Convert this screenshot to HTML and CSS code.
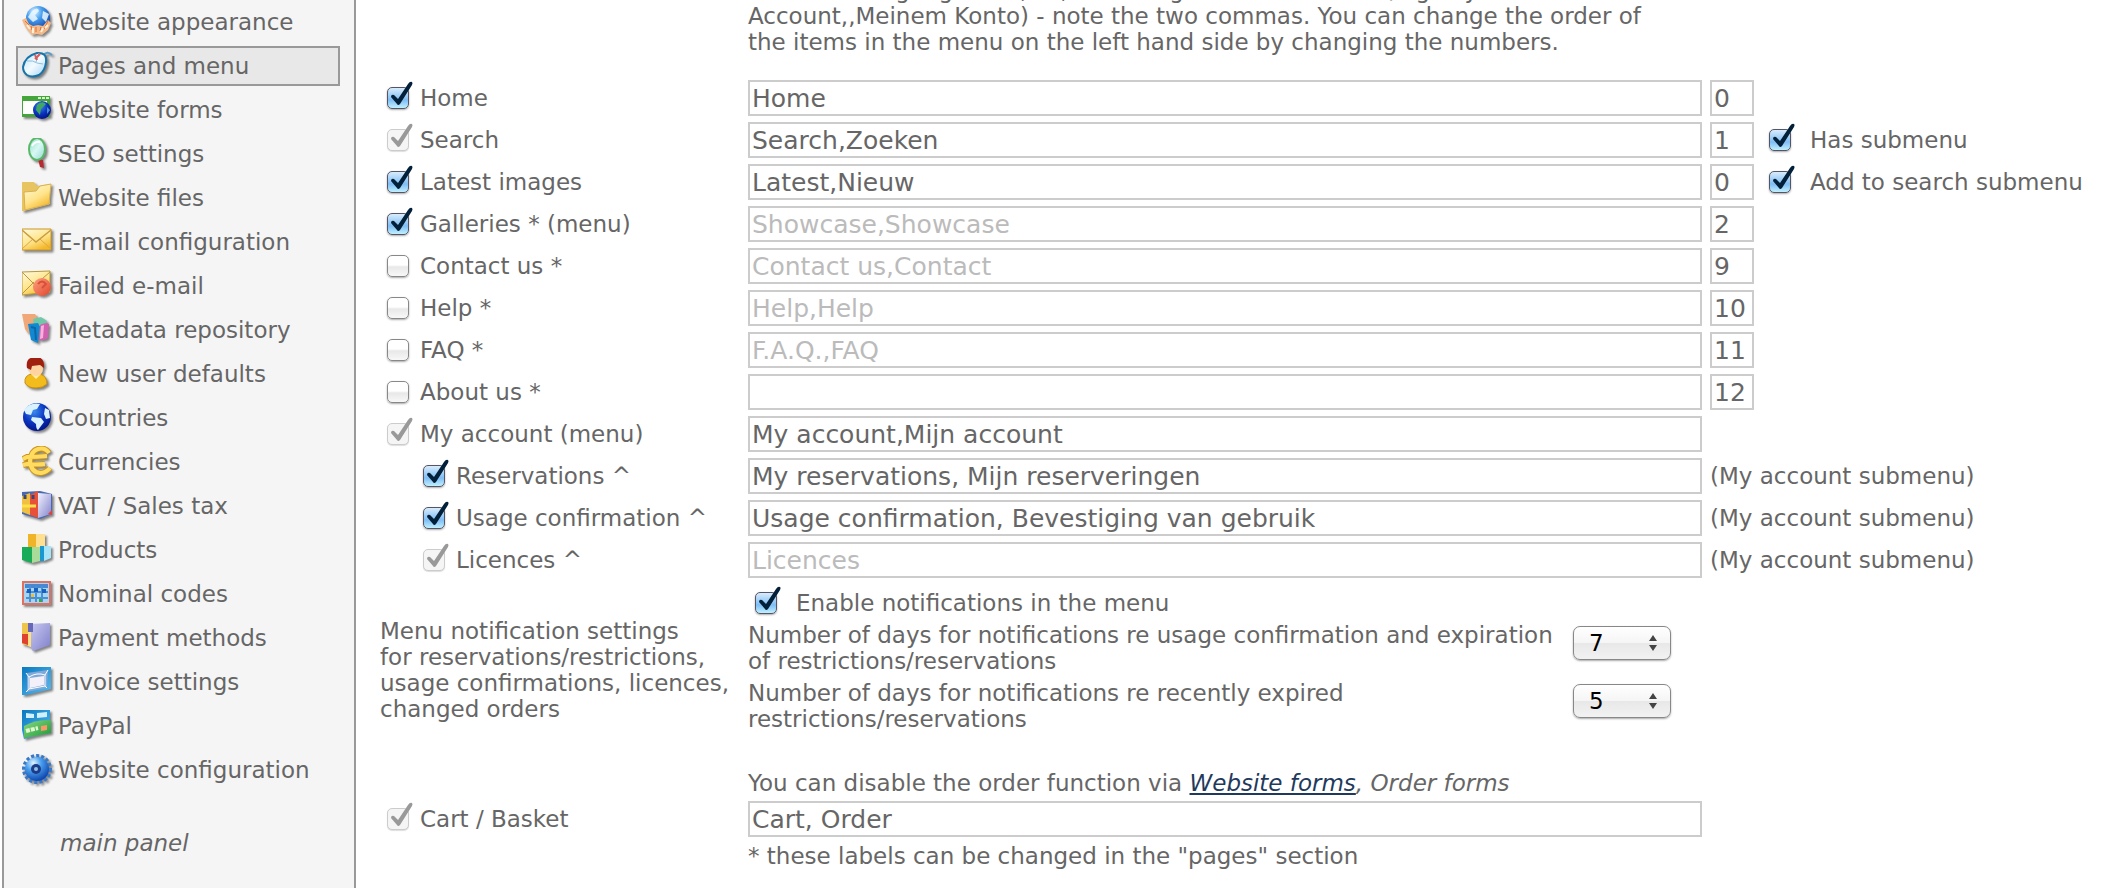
FILE: index.html
```
<!DOCTYPE html>
<html lang="en">
<head>
  <meta charset="UTF-8">
  <title>Pages and menu</title>
  <meta name="viewport" content="width=device-width, initial-scale=1.0">
  <link rel="stylesheet" href="styles.css">
</head>
<body>
  <!-- shared icon colours -->
  <svg class="defs" width="0" height="0" aria-hidden="true">
    <defs>
      <radialGradient id="blue" cx=".35" cy=".25" r=".8"><stop offset="0" stop-color="#e2f5ff"/><stop offset=".4" stop-color="#4aa0f0"/><stop offset="1" stop-color="#0a3fa8"/></radialGradient>
      <radialGradient id="navy" cx=".4" cy=".3" r=".8"><stop offset="0" stop-color="#3a8cf0"/><stop offset=".5" stop-color="#0b35c0"/><stop offset="1" stop-color="#000a78"/></radialGradient>
      <linearGradient id="gold" x2=".6" y2="1"><stop offset="0" stop-color="#fffbe0"/><stop offset=".6" stop-color="#ffe48a"/><stop offset="1" stop-color="#f4b82c"/></linearGradient>
      <linearGradient id="pale" x2="1" y2="1"><stop offset="0" stop-color="#bfe4fa"/><stop offset=".5" stop-color="#f2fbff"/><stop offset="1" stop-color="#9fd0f2"/></linearGradient>
      <linearGradient id="mint" x2="1" y2="1"><stop offset="0" stop-color="#8fdcc8"/><stop offset=".5" stop-color="#d8f8f4"/><stop offset="1" stop-color="#90d8d0"/></linearGradient>
      <linearGradient id="green" x2="1" y2="1"><stop offset="0" stop-color="#8fd880"/><stop offset="1" stop-color="#169a38"/></linearGradient>
      <linearGradient id="red" x2="1" y2="1"><stop offset="0" stop-color="#ffa080"/><stop offset="1" stop-color="#e0452c"/></linearGradient>
      <linearGradient id="lilac" x2="1" y2="1"><stop offset="0" stop-color="#f2f2ff"/><stop offset="1" stop-color="#8484cc"/></linearGradient>
      <linearGradient id="violet" x2="1" y2="1"><stop offset="0" stop-color="#c8c8f0"/><stop offset="1" stop-color="#8080cc"/></linearGradient>
      <linearGradient id="sky" x2="1" y2="1"><stop offset="0" stop-color="#0a78c0"/><stop offset="1" stop-color="#58bcf0"/></linearGradient>
    </defs>
  </svg>

  <div class="page">
    <nav class="sidebar">
      <a class="menu-item" href="#">
        <svg class="icon" viewBox="0 0 32 32"><circle cx="16" cy="12" r="12" fill="url(#blue)"/><path d="M10 5q6-5 7 0l-4 4 3 4-5 3-5-5zM21 5l6 3-3 8-4-4z" fill="#eaf8ff" opacity=".85"/><path d="M0 14l4-2 3 6 4 2 5-1 5 1 5-6 3 3-3 7-6 5-5-1-5 1-6-7z" fill="#f5b888"/><path d="M3 15l4 4M9 20l1 4M14 21v5M19 21l-1 4M24 19l-2 4M26 15l-2 4" stroke="#d87038"/><path d="M5 19l3 4M11 22v5M21 22l-2 4M26 19l-3 3" stroke="#fff0d8" stroke-width="2"/></svg>
        Website appearance
      </a>
      <a class="menu-item active" href="#">
        <svg class="icon" viewBox="0 0 32 32"><path d="M21 6q4-6 9-1" fill="none" stroke="#5a9cc8" stroke-width="2"/><path d="M1 17Q3 6 15 3q10-1 9 9-1 9-7 13-7 3-12 0-4-3-4-8z" fill="url(#pale)" stroke="#1874a8" stroke-width="2"/><path d="M5 11q6-1 10 2l6 1M14 12l3-9" fill="none" stroke="#8cc0e0"/><path d="M13 5l2 5M18 4l-5 5" stroke="#e05858" stroke-width="2"/></svg>
        Pages and menu
      </a>
      <a class="menu-item" href="#">
        <svg class="icon" viewBox="0 0 32 32"><path d="M0 2h28v21H0z" fill="#44a53a"/><path d="M1 7h24v13H1z" fill="#fff"/><path d="M16 3h3v2h-3zM20 3h3v2h-3zM24 3h3v2h-3z" fill="#d5f5c8"/><circle cx="20" cy="16" r="9" fill="url(#navy)"/><path d="M15 11q5-5 9-1l-5 5-1 6-4-5z" fill="#40a860"/><path d="M25 13l3 3-3 4z" fill="#4890c8"/></svg>
        Website forms
      </a>
      <a class="menu-item" href="#">
        <svg class="icon" viewBox="0 0 32 32"><path d="M16 21l5 1 1 8-4-1z" fill="#b82a30"/><ellipse cx="15" cy="11" rx="8" ry="11" fill="url(#mint)" stroke="#58b868" stroke-width="2"/><path d="M10 8q3-5 8-4" fill="none" stroke="#fff" stroke-width="2"/></svg>
        SEO settings
      </a>
      <a class="menu-item" href="#">
        <svg class="icon" viewBox="0 0 32 32"><path d="M0 0h12l3 4 13-2v20L2 29H0z" fill="#e8c460"/><path d="M2 10l12-1 4-5 11-2-2 20-24 6z" fill="url(#gold)" stroke="#d8b050"/></svg>
        Website files
      </a>
      <a class="menu-item" href="#">
        <svg class="icon" viewBox="0 0 32 32"><path d="M0 3h29v21H0z" fill="url(#gold)" stroke="#c89828"/><path d="M0 23l11-10M29 23l-11-10" stroke="#d8a848"/><path d="M0 4l14 12L29 4" fill="none" stroke="#c89c40" stroke-width="1.5"/></svg>
        E-mail configuration
      </a>
      <a class="menu-item" href="#">
        <svg class="icon" viewBox="0 0 32 32"><path d="M0 2l28-1v21L0 25z" fill="url(#gold)" stroke="#b89838"/><path d="M0 2l13 13L28 2M0 24l12-12" fill="none" stroke="#b89848"/><circle cx="20" cy="17" r="9" fill="url(#red)"/><path d="M16 14q4-5 8 0l-4 4" fill="none" stroke="#d85038" stroke-width="2"/></svg>
        Failed e-mail
      </a>
      <a class="menu-item" href="#">
        <svg class="icon" viewBox="0 0 32 32"><path d="M0 0h13q3 3 1 8l-7 12-4-5z" fill="#f0a878"/><path d="M11 5l8-2 6 4-2 5H12z" fill="#70c8a8"/><path d="M6 10l10-1 2 4-2 16-7-3z" fill="#1288d0"/><path d="M9 13l4 1 1 12" fill="none" stroke="#0a68a8" stroke-width="2"/><path d="M18 11q5-3 9-1l-1 14q-4 3-9 2z" fill="#d060b0"/><path d="M19 12l3-1-1 13-3 1z" fill="#f8b0dc"/></svg>
        Metadata repository
      </a>
      <a class="menu-item" href="#">
        <svg class="icon" viewBox="0 0 32 32"><path d="M3 25q-1-8 7-9h8q7 2 7 10-4 4-11 4-8 0-11-5z" fill="#f2bc1c" stroke="#c88c10"/><path d="M9 16l5 5 5-5" fill="#fff0a0"/><ellipse cx="14" cy="11" rx="7" ry="7" fill="#ffd4a0"/><path d="M5 10Q3-1 14-1q9 0 8 11l-4-3-8 1-1 4z" fill="#a02010"/></svg>
        New user defaults
      </a>
      <a class="menu-item" href="#">
        <svg class="icon" viewBox="0 0 32 32"><circle cx="15" cy="15" r="14" fill="url(#navy)"/><path d="M2 8Q8 0 18 2l-3 5-4 1-2 5-5-1zM10 15l9 1 3 4-6 8q-2-1-2-6l-5-4zM23 6l4 2 1 8-4 1-2-5z" fill="#d8f2ff"/></svg>
        Countries
      </a>
      <a class="menu-item" href="#">
        <svg class="icon" viewBox="0 0 32 32"><path d="M27 7Q23 1 16 3 9 5 8 15q1 12 11 12 6-1 9-5M1 13l4-2q10 0 20-1M1 19l4-1q10 1 18 0" fill="none" stroke="#c8941c" stroke-width="6"/><path d="M27 7Q23 1 16 3 9 5 8 15q1 12 11 12 6-1 9-5M1 13l4-2q10 0 20-1M1 19l4-1q10 1 18 0" fill="none" stroke="#ffdc60" stroke-width="4"/></svg>
        Currencies
      </a>
      <a class="menu-item" href="#">
        <svg class="icon" viewBox="0 0 32 32"><path d="M0 2l18-1 12 3v20l-12 5L0 24z" fill="#4868b0"/><path d="M0 6l8-3v22l-8-3z" fill="#f0c040"/><path d="M8 5l8-4v27l-8-3z" fill="#e85038"/><path d="M16 3l13 1v20l-13 4z" fill="url(#lilac)"/><path d="M0 16h14" stroke="#ffe048" stroke-width="3"/><path d="M3 5v4M11 5v4" stroke="#384878" stroke-width="3"/><path d="M26 24l4-4v5z" fill="#e04040"/></svg>
        VAT / Sales tax
      </a>
      <a class="menu-item" href="#">
        <svg class="icon" viewBox="0 0 32 32"><path d="M6 0h8v14H6z" fill="#f0b428"/><path d="M14 0h9v14h-9z" fill="#ffdf90"/><path d="M0 13h10v16l-10-3z" fill="#18ac58"/><path d="M10 13h8v14l-8 2z" fill="#a8dc98"/><path d="M18 12h4v15h-4z" fill="#1898d0"/><path d="M22 12h7v12l-7 3z" fill="#a8e4f8"/></svg>
        Products
      </a>
      <a class="menu-item" href="#">
        <svg class="icon" viewBox="0 0 32 32"><path d="M1 4h27v22H1z" fill="#a8d4f0" stroke="#e07060" stroke-width="2"/><path d="M3 6h23v4H3z" fill="#4888d0"/><path d="M4 14h22M4 20h22M8 8v16M14 8v16M20 8v16" stroke="#4890d8" stroke-width="2"/><path d="M5 11h4v4H5zM12 10h4v4h-4zM20 11h4v4h-4z" fill="#1860c0"/><path d="M9 16h3v3H9z" fill="#f0c030"/><path d="M17 21h3v3h-3z" fill="#30a850"/></svg>
        Nominal codes
      </a>
      <a class="menu-item" href="#">
        <svg class="icon" viewBox="0 0 32 32"><path d="M0 1h10v24l-10-3z" fill="#f0c448"/><path d="M0 12h6v11l-6-2z" fill="#e04030"/><path d="M6 2h5v24l-5-2z" fill="#ffe080"/><path d="M9 2l19-1v22l-17 6-2-3z" fill="url(#violet)"/><path d="M6 1h5v9H6z" fill="#6868b8"/></svg>
        Payment methods
      </a>
      <a class="menu-item" href="#">
        <svg class="icon" viewBox="0 0 32 32"><path d="M0 1h29v22L4 29H0z" fill="url(#sky)"/><path d="M5 7l21-3-1 18-20 4z" fill="#80a8d8"/><path d="M8 12l14-2v9L8 22z" fill="#f4f0fa"/><path d="M7 11q8-5 16-2v11L7 23zM4 7l3 4M26 4l-3 5M4 26l3-3M25 22l-2-2" fill="none" stroke="#fff"/></svg>
        Invoice settings
      </a>
      <a class="menu-item" href="#">
        <svg class="icon" viewBox="0 0 32 32"><path d="M0 0h28v22L2 29 0 20z" fill="url(#sky)"/><path d="M4 3l8 1v4H4zM15 3l10-1v5l-10 1z" fill="#d0f0ff"/><path d="M2 16q12-7 27-6v13L2 28z" fill="url(#green)"/><path d="M4 21l12-3" stroke="#dff8d0" stroke-width="4" stroke-dasharray="4 1"/><path d="M19 16l6-1v5l-6 1z" fill="#ff9868"/></svg>
        PayPal
      </a>
      <a class="menu-item" href="#">
        <svg class="icon" viewBox="0 0 32 32"><circle cx="15" cy="15" r="13" fill="none" stroke="#3878c8" stroke-width="4" stroke-dasharray="3 2"/><circle cx="15" cy="15" r="12" fill="url(#blue)"/><circle cx="14" cy="15" r="5" fill="#1c3c88"/><circle cx="14" cy="15" r="2" fill="#90c0e8"/></svg>
        Website configuration
      </a>
      <a class="main-panel" href="#">main panel</a>
    </nav>

    <main>
      <form>
        <p class="intro">To omit a language text, so, removing the second item (e.g. My<br>Account,,Meinem Konto) - note the two commas. You can change the order of<br>the items in the menu on the left hand side by changing the numbers.</p>

        <div class="row">
          <label class="check"><input type="checkbox" checked>Home</label>
          <input class="text" type="text" value="Home" aria-label="Home label">
          <div class="extra"><input class="text num" type="text" value="0" aria-label="Home order"></div>
        </div>
        <div class="row">
          <label class="check"><input type="checkbox" checked disabled>Search</label>
          <input class="text" type="text" value="Search,Zoeken" aria-label="Search label">
          <div class="extra">
            <input class="text num" type="text" value="1" aria-label="Search order">
            <label class="check wide"><input type="checkbox" checked>Has submenu</label>
          </div>
        </div>
        <div class="row">
          <label class="check"><input type="checkbox" checked>Latest images</label>
          <input class="text" type="text" value="Latest,Nieuw" aria-label="Latest images label">
          <div class="extra">
            <input class="text num" type="text" value="0" aria-label="Latest images order">
            <label class="check wide"><input type="checkbox" checked>Add to search submenu</label>
          </div>
        </div>
        <div class="row">
          <label class="check"><input type="checkbox" checked>Galleries * (menu)</label>
          <input class="text" type="text" value="Showcase,Showcase" aria-label="Galleries label" disabled>
          <div class="extra"><input class="text num" type="text" value="2" aria-label="Galleries order"></div>
        </div>
        <div class="row">
          <label class="check"><input type="checkbox">Contact us *</label>
          <input class="text" type="text" value="Contact us,Contact" aria-label="Contact us label" disabled>
          <div class="extra"><input class="text num" type="text" value="9" aria-label="Contact us order"></div>
        </div>
        <div class="row">
          <label class="check"><input type="checkbox">Help *</label>
          <input class="text" type="text" value="Help,Help" aria-label="Help label" disabled>
          <div class="extra"><input class="text num" type="text" value="10" aria-label="Help order"></div>
        </div>
        <div class="row">
          <label class="check"><input type="checkbox">FAQ *</label>
          <input class="text" type="text" value="F.A.Q.,FAQ" aria-label="FAQ label" disabled>
          <div class="extra"><input class="text num" type="text" value="11" aria-label="FAQ order"></div>
        </div>
        <div class="row">
          <label class="check"><input type="checkbox">About us *</label>
          <input class="text" type="text" value="" aria-label="About us label" disabled>
          <div class="extra"><input class="text num" type="text" value="12" aria-label="About us order"></div>
        </div>
        <div class="row">
          <label class="check"><input type="checkbox" checked disabled>My account (menu)</label>
          <input class="text" type="text" value="My account,Mijn account" aria-label="My account label">
        </div>
        <div class="row">
          <label class="check sub"><input type="checkbox" checked>Reservations ^</label>
          <input class="text" type="text" value="My reservations, Mijn reserveringen" aria-label="Reservations label">
          <div class="extra">(My account submenu)</div>
        </div>
        <div class="row">
          <label class="check sub"><input type="checkbox" checked>Usage confirmation ^</label>
          <input class="text" type="text" value="Usage confirmation, Bevestiging van gebruik" aria-label="Usage confirmation label">
          <div class="extra">(My account submenu)</div>
        </div>
        <div class="row">
          <label class="check sub"><input type="checkbox" checked disabled>Licences ^</label>
          <input class="text" type="text" value="Licences" aria-label="Licences label" disabled>
          <div class="extra">(My account submenu)</div>
        </div>

        <div class="row notify">
          <div class="notify-title">Menu notification settings<br>for reservations/restrictions,<br>usage confirmations, licences,<br>changed orders</div>
          <div>
            <label class="check wide"><input type="checkbox" checked>Enable notifications in the menu</label>
            <div class="days">
              <label for="days-usage">Number of days for notifications re usage confirmation and expiration of restrictions/reservations</label>
              <span class="select">
                <select id="days-usage"><option>7</option></select>
                <svg viewBox="0 0 8 16"><path d="M4 0l4 6H0zM4 16l4-6H0z" fill="#444"/></svg>
              </span>
            </div>
            <div class="days">
              <label for="days-expired">Number of days for notifications re recently expired restrictions/reservations</label>
              <span class="select">
                <select id="days-expired"><option>5</option></select>
                <svg viewBox="0 0 8 16"><path d="M4 0l4 6H0zM4 16l4-6H0z" fill="#444"/></svg>
              </span>
            </div>
          </div>
        </div>

        <p class="note order-note">You can disable the order function via <i><a href="#">Website forms</a>, Order forms</i></p>
        <div class="row">
          <label class="check"><input type="checkbox" checked disabled>Cart / Basket</label>
          <input class="text" type="text" value="Cart, Order" aria-label="Cart label">
        </div>
        <p class="note">* these labels can be changed in the "pages" section</p>
      </form>
    </main>
  </div>
</body>
</html>
```
FILE: styles.css
```
* {
  box-sizing: border-box;
}
html, body {
  margin: 0;
  height: 100%;
  overflow: hidden;
}
body {
  font-family: Verdana, 'DejaVu Sans', sans-serif;
  font-size: 23px;
  line-height: 26px;
  color: #666;
  background: #fff;
}
.defs {
  position: absolute;
}
.page {
  display: flex;
  min-height: 100%;
}

/* left menu */
.sidebar {
  flex: none;
  width: 354px;
  margin-left: 2px;
  padding: 2px 14px 0 12px;
  background: #f5f5f5;
  border: solid #999;
  border-width: 0 2px;
}
.menu-item {
  display: flex;
  align-items: center;
  gap: 4px;
  height: 40px;
  margin-bottom: 4px;
  padding-left: 4px;
  border: 2px solid transparent;
  color: #666;
  text-decoration: none;
}
.menu-item.active {
  background: #e8e8e8;
  border-color: #999;
}
.icon {
  width: 32px;
  height: 32px;
  flex: none;
  filter: drop-shadow(2px 2px 1px #0007);
}
.main-panel {
  display: block;
  margin: 40px 0 0 44px;
  color: #666;
  font-style: italic;
  text-decoration: none;
}

/* settings form */
main {
  flex: 1;
  min-width: 0;
  padding-left: 24px;
}
.intro {
  margin: -23px 0 25px 368px;
}
.row {
  display: grid;
  grid-template-columns: 360px minmax(0, 1fr) 408px;
  gap: 8px;
  align-items: center;
  margin-bottom: 6px;
}
.check {
  display: flex;
  align-items: center;
  gap: 11px;
  padding-left: 7px;
}
.check.sub {
  padding-left: 43px;
}
.check.wide {
  gap: 19px;
}
.extra {
  display: flex;
  align-items: center;
  gap: 8px;
}
.text {
  width: 100%;
  height: 36px;
  padding: 0 2px;
  border: 2px solid #ccc;
  border-radius: 0;
  background: #fff;
  color: #666;
  font-family: 'Lucida Grande', 'DejaVu Sans', sans-serif;
  font-size: 25px;
}
.text:disabled {
  color: #bbb;
}
.num {
  width: 44px;
}

input[type="checkbox"] {
  appearance: none;
  position: relative;
  flex: none;
  width: 22px;
  height: 22px;
  margin: 0;
  border: 1px solid #888;
  border-radius: 5px;
  background: linear-gradient(#fff 45%, #e8e8e8 55%, #f8f8f8);
  box-shadow: 0 1px 2px #0005;
}
input[type="checkbox"]:checked {
  border-color: #556;
  background: linear-gradient(#d8ecfc, #7fbdf4 60%, #c0f0ff);
}
input[type="checkbox"]:disabled {
  border-color: #ccc;
  background: #f5f5f5;
  box-shadow: 0 1px 1px #0002;
}
input[type="checkbox"]:checked::before {
  content: "";
  position: absolute;
  left: -1px;
  top: -7px;
  width: 28px;
  height: 28px;
  background: #02203a;
  clip-path: path("M4 16Q4 13 7 14L11 18L21 3Q23 0 25 1Q26 2 25 4L13 23Q11 25 10 23Z");
}
input[type="checkbox"]:disabled::before {
  background: #999;
}

/* notifications */
.notify {
  align-items: start;
  padding-top: 6px;
}
.notify-title {
  padding-top: 28px;
  white-space: nowrap;
}
.days {
  display: flex;
  align-items: flex-start;
  gap: 16px;
  margin-top: 6px;
  padding-right: 31px;
}
.days label {
  flex: 1;
}
.select {
  position: relative;
  flex: none;
  margin-top: 4px;
}
select {
  appearance: none;
  display: block;
  width: 98px;
  height: 34px;
  padding: 0 15px;
  border: 1px solid #888;
  border-radius: 7px;
  background: linear-gradient(#fff, #f5f5f5 50%, #e8e8e8 51%, #f2f2f2);
  box-shadow: 0 1px 2px #0005;
  color: #000;
  font-family: 'Lucida Grande', 'DejaVu Sans', sans-serif;
  font-size: 23px;
}
.select svg {
  position: absolute;
  right: 14px;
  top: 9px;
  width: 8px;
  height: 16px;
  pointer-events: none;
}

.note {
  margin: 0 0 5px 368px;
}
.order-note {
  margin-top: 38px;
}
.note a {
  color: #1f3a5c;
}
```
